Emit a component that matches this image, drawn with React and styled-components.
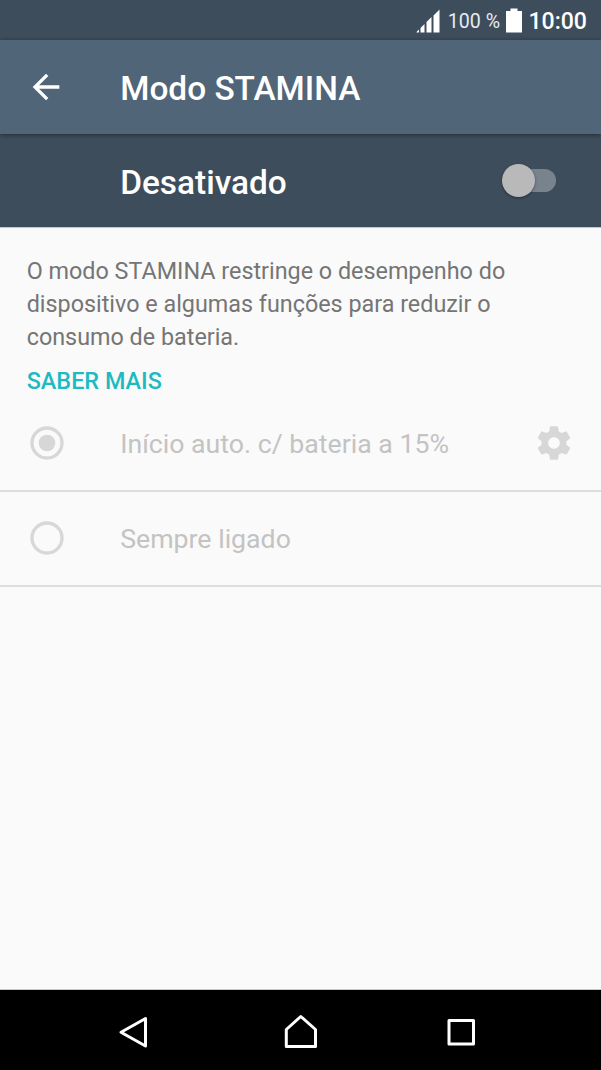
import React, { useState } from 'react'
import styled, { createGlobalStyle } from 'styled-components'


const GlobalStyle = createGlobalStyle`
* {
    box-sizing: border-box;
}
body {
    margin: 0;
    background: #fafafa;
    font-family: Roboto, "Liberation Sans", sans-serif;
}
`
const Screen = styled.div`
    display: flex;
    flex-direction: column;
    width: 601px;
    height: 1070px;
    overflow: hidden;
    background: #fafafa;
`
const StatusBar = styled.div`
    flex: none;
    height: 40px;
    padding: 0 14px 0 0;
    display: flex;
    align-items: center;
    justify-content: flex-end;
    background: #3e4d5c;
    color: #fff;
`
const Percent = styled.span`
    margin: 2px 6px 0 8px;
    font-size: 19.6px;
    color: #e6ebef;
`
const Clock = styled.span`
    margin: 2px 0 0 6.4px;
    font-size: 23.1px;
    font-weight: 500;
`
const AppBar = styled.header`
    flex: none;
    height: 93.5px;
    padding-left: 26.4px;
    display: flex;
    align-items: center;
    background: #516578;
    color: #fff;
    box-shadow: 0 1px 5px rgba(0, 0, 0, 0.45);
    z-index: 1;
`
const BackButton = styled.button`
    width: 93.8px;
    height: 40px;
    padding: 0;
    border: none;
    background: none;
    color: inherit;
    text-align: left;
    cursor: pointer;
`
const Title = styled.h1`
    margin: 5px 0 0;
    font-size: 33.4px;
    line-height: 40px;
    font-weight: 500;
`
const SwitchBar = styled.div`
    flex: none;
    height: 93.5px;
    padding: 0 45px 0 120.2px;
    display: flex;
    align-items: center;
    justify-content: space-between;
    background: #3e4d5c;
    color: #fff;
`
const Track = styled.button`
    width: 52px;
    height: 23.4px;
    margin-top: 1px;
    padding: 0;
    border: none;
    border-radius: 12px;
    display: flex;
    align-items: center;
    justify-content: ${props => props.$on ? "flex-end" : "flex-start"};
    background: #78838d;
    cursor: pointer;
`
const Thumb = styled.span`
    flex: none;
    width: 33.4px;
    height: 33.4px;
    margin-left: -2.4px;
    border-radius: 50%;
    background: #b9b9b9;
    box-shadow: 0 1px 3px rgba(0, 0, 0, 0.4);
`
const Content = styled.main`
    flex: 1;
    border-top: 1px solid #c2c8ce;
    border-bottom: 1px solid #c8c8c8;
`
const Description = styled.p`
    margin: 0;
    padding: 27px 26.7px 0;
    font-size: 23.35px;
    line-height: 32.8px;
    color: #757575;
`
const LearnMore = styled.a`
    display: block;
    padding: 14px 26.7px 0;
    font-size: 23.4px;
    line-height: 28px;
    font-weight: 500;
    color: #1fbac1;
`
const Option = styled.div`
    height: ${props => props.$height}px;
    padding: 0 26.7px;
    display: flex;
    align-items: center;
    border-bottom: 2px solid #dedede;
    color: #d7d7d7;
`
const OptionLabel = styled.span`
    flex: 1;
    margin: 2px 0 0 53.5px;
    font-size: 26.7px;
    line-height: 32px;
    color: #c3c3c3;
`
const NavBar = styled.nav`
    flex: none;
    height: 80.5px;
    background: #000;
`
const Icon = styled.svg`
    display: block;
    flex: none;
`

const Radio = ({ checked }) => (
    <Icon width="40" height="40" viewBox="0 0 24 24" fill="none">
        <circle cx="12" cy="12" r="9" stroke="currentColor" strokeWidth="2" />
        {checked && <circle cx="12" cy="12" r="5" fill="currentColor" />}
    </Icon>
)

const App = () => {
    const [on, setOn] = useState(false)

    return (
        <Screen>
            <GlobalStyle />
            <StatusBar>
                <Icon width="24" height="26" viewBox="0 0 24 26" fill="#fff">
                    <path d="M0.5 25.5V25L3 22.500V25.500ZM4.500 25.500V21L8.500 17V25.500ZM10.500 25.500V15L15.500 10V25.500ZM17.500 25.500V8.500L23.500 2.500V25.500Z" />
                </Icon>
                <Percent>100 %</Percent>
                <Icon width="16" height="25" viewBox="0 0 16 25" fill="#fff">
                    <path d="M4.500 0.500H11.5V3H16V24.500H0V3H4.500Z" />
                </Icon>
                <Clock>10:00</Clock>
            </StatusBar>
            <AppBar>
                <BackButton aria-label="Voltar">
                    <Icon width="40" height="40" viewBox="0 0 24 24" fill="currentColor">
                        <path d="M20 11H7.830l5.590-5.590L12 4l-8 8 8 8 1.410-1.410L7.830 13H20v-2z" />
                    </Icon>
                </BackButton>
                <Title>Modo STAMINA</Title>
            </AppBar>
            <SwitchBar>
                <Title as="h2">{on ? "Ativado" : "Desativado"}</Title>
                <Track $on={on} onClick={() => setOn(!on)} aria-label="Modo STAMINA">
                    <Thumb />
                </Track>
            </SwitchBar>
            <Content>
                <Description>
                    O modo STAMINA restringe o desempenho do dispositivo e algumas funções para reduzir o consumo de bateria.
                </Description>
                <LearnMore>SABER MAIS</LearnMore>
                <Option $height={96.4}>
                    <Radio checked />
                    <OptionLabel>Início auto. c/ bateria a 15%</OptionLabel>
                    <Icon width="40" height="40" viewBox="0 0 24 24" fill="currentColor">
                        <path d="M19.430 12.980c.04-.32.07-.64.07-.98s-.03-.66-.07-.98l2.110-1.650c.19-.15.24-.42.12-.64l-2-3.460c-.12-.22-.39-.3-.61-.22l-2.490 1c-.52-.4-1.080-.73-1.690-.98l-.38-2.650C14.460 2.180 14.250 2 14 2h-4c-.25 0-.46.18-.49.42l-.38 2.650c-.61.25-1.170.59-1.690.98l-2.490-1c-.23-.09-.49 0-.61.22l-2 3.460c-.13.22-.07.49.12.64l2.110 1.650c-.04.32-.07.65-.07.98s.03.66.07.98l-2.110 1.650c-.19.15-.24.42-.12.64l2 3.460c.12.22.39.3.61.22l2.490-1c.52.4 1.080.73 1.690.98l.38 2.650c.03.24.24.42.49.42h4c.25 0 .46-.18.49-.42l.38-2.650c.61-.25 1.170-.59 1.690-.98l2.490 1c.23.09.49 0 .61-.22l2-3.460c.12-.22.07-.49-.12-.64l-2.110-1.650zM12 15.500c-1.930 0-3.500-1.570-3.500-3.500s1.570-3.500 3.500-3.500 3.500 1.570 3.500 3.500-1.570 3.500-3.500 3.500z" />
                    </Icon>
                </Option>
                <Option $height={95}>
                    <Radio />
                    <OptionLabel>Sempre ligado</OptionLabel>
                </Option>
            </Content>
            <NavBar>
                <Icon width="601" height="80" viewBox="0 0 601 80" fill="none" stroke="#fff" strokeWidth="3" strokeLinejoin="round">
                    <path d="M145.500 28.500V56L121 42.200Z" />
                    <path d="M286.300 56.500V39.500L300.800 26.500L315.500 39.500V56.500Z" />
                    <rect x="449" y="30.500" width="24.500" height="23.500" />
                </Icon>
            </NavBar>
        </Screen>
    )
}

export default App
